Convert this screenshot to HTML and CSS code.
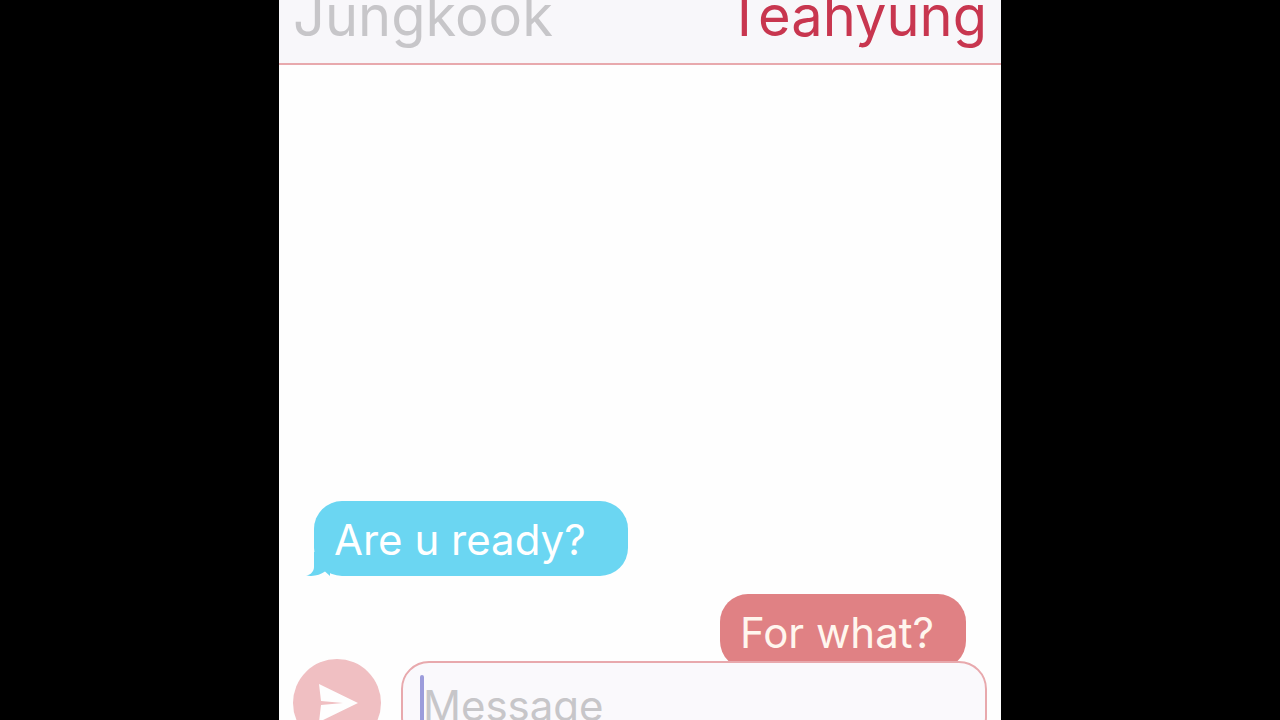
FILE: index.html
```html
<!DOCTYPE html>
<html lang="en">

<head>
	<meta charset="utf-8">
	<title>Chat</title>
	<meta name="viewport" content="width=device-width, initial-scale=1.0">
	<link rel="stylesheet" href="styles.css">
</head>

<body>
	<div class="phone">
		<header class="people">
			<button type="button" class="person">Jungkook</button>
			<button type="button" class="person active">Teahyung</button>
		</header>

		<main class="messages">
			<div class="bubble received">
				<svg class="tail" viewBox="0 0 24 24" aria-hidden="true">
					<path d="M8 0V15C8 19 5 23 0 23.500C7 25 14 23 19 19.500L24 24V0Z" />
				</svg>
				<span>Are u ready?</span>
			</div>
			<div class="bubble sent"><span>For what?</span></div>
		</main>

		<form class="composer">
			<button type="button" class="send" aria-label="Send">
				<svg viewBox="0 0 88 88" aria-hidden="true">
					<path d="M26 25L65 44L26 63L28 46L50 44L28 42Z" />
				</svg>
			</button>
			<div class="field">
				<input type="text" placeholder="Message" aria-label="Message">
				<span class="caret"></span>
			</div>
		</form>
	</div>
</body>

</html>
```

FILE: styles.css
```css
:root {
	--line: #e8a9ad;
	--blue: #6bd6f2;
	--pink: #e08184;
	--grey: #c7c6c9;
}

* {
	box-sizing: border-box;
}

body {
	margin: 0;
	height: 100vh;
	overflow: hidden;
	background: #000;
	font-family: Inter, "Liberation Sans", sans-serif;
}

/* header and composer run past the top and bottom of the window */
.phone {
	display: flex;
	flex-direction: column;
	width: 100%;
	max-width: 722px;
	height: calc(100vh + 62px);
	margin: -35px auto 0;
	background: #fefefe;
}

button,
input {
	font: inherit;
	border: none;
	padding: 0;
}

.people {
	display: flex;
	justify-content: space-between;
	padding: 16px 14px 12px;
	background: #f8f7fa;
	border-bottom: 2px solid var(--line);
}

.person {
	background: none;
	color: var(--grey);
	font-size: 56px;
	line-height: 70px;
	cursor: pointer;
}

.person.active {
	color: #c8364f;
}

.messages {
	flex: 1;
	display: flex;
	flex-direction: column;
	justify-content: flex-end;
	gap: 18px;
	padding: 0 35px;
}

.bubble {
	position: relative;
	height: 75px;
	padding: 0 32px 0 20px;
	border-radius: 28px;
	color: #fff;
	font-size: 42px;
	line-height: 78px;
}

.received {
	align-self: flex-start;
	padding-right: 42px;
	background: var(--blue);
}

.sent {
	align-self: flex-end;
	background: var(--pink);
	color: #fff6ee;
}

.tail {
	position: absolute;
	left: -8px;
	bottom: 0;
	width: 24px;
	height: 24px;
	fill: var(--blue);
}

/* the last bubble slides under the message box */
.composer {
	position: relative;
	display: flex;
	align-items: center;
	gap: 20px;
	margin-top: -10px;
	padding: 0 14px;
}

.send {
	flex: none;
	width: 88px;
	height: 88px;
	border-radius: 50%;
	background: #f0bfc2;
	cursor: pointer;
}

.send svg {
	display: block;
	fill: #fefefe;
}

.field {
	position: relative;
	flex: 1;
}

.field input {
	width: 100%;
	height: 84px;
	padding: 4px 20px 0;
	border: 2px solid var(--line);
	border-radius: 28px;
	background: #faf9fc;
	color: #333;
	font-size: 42px;
	outline: none;
}

.field input::placeholder {
	color: var(--grey);
	opacity: 1;
}

.caret {
	position: absolute;
	left: 19px;
	top: 14px;
	width: 4px;
	height: 56px;
	border-radius: 2px;
	background: #9c9cdb;
}
```
